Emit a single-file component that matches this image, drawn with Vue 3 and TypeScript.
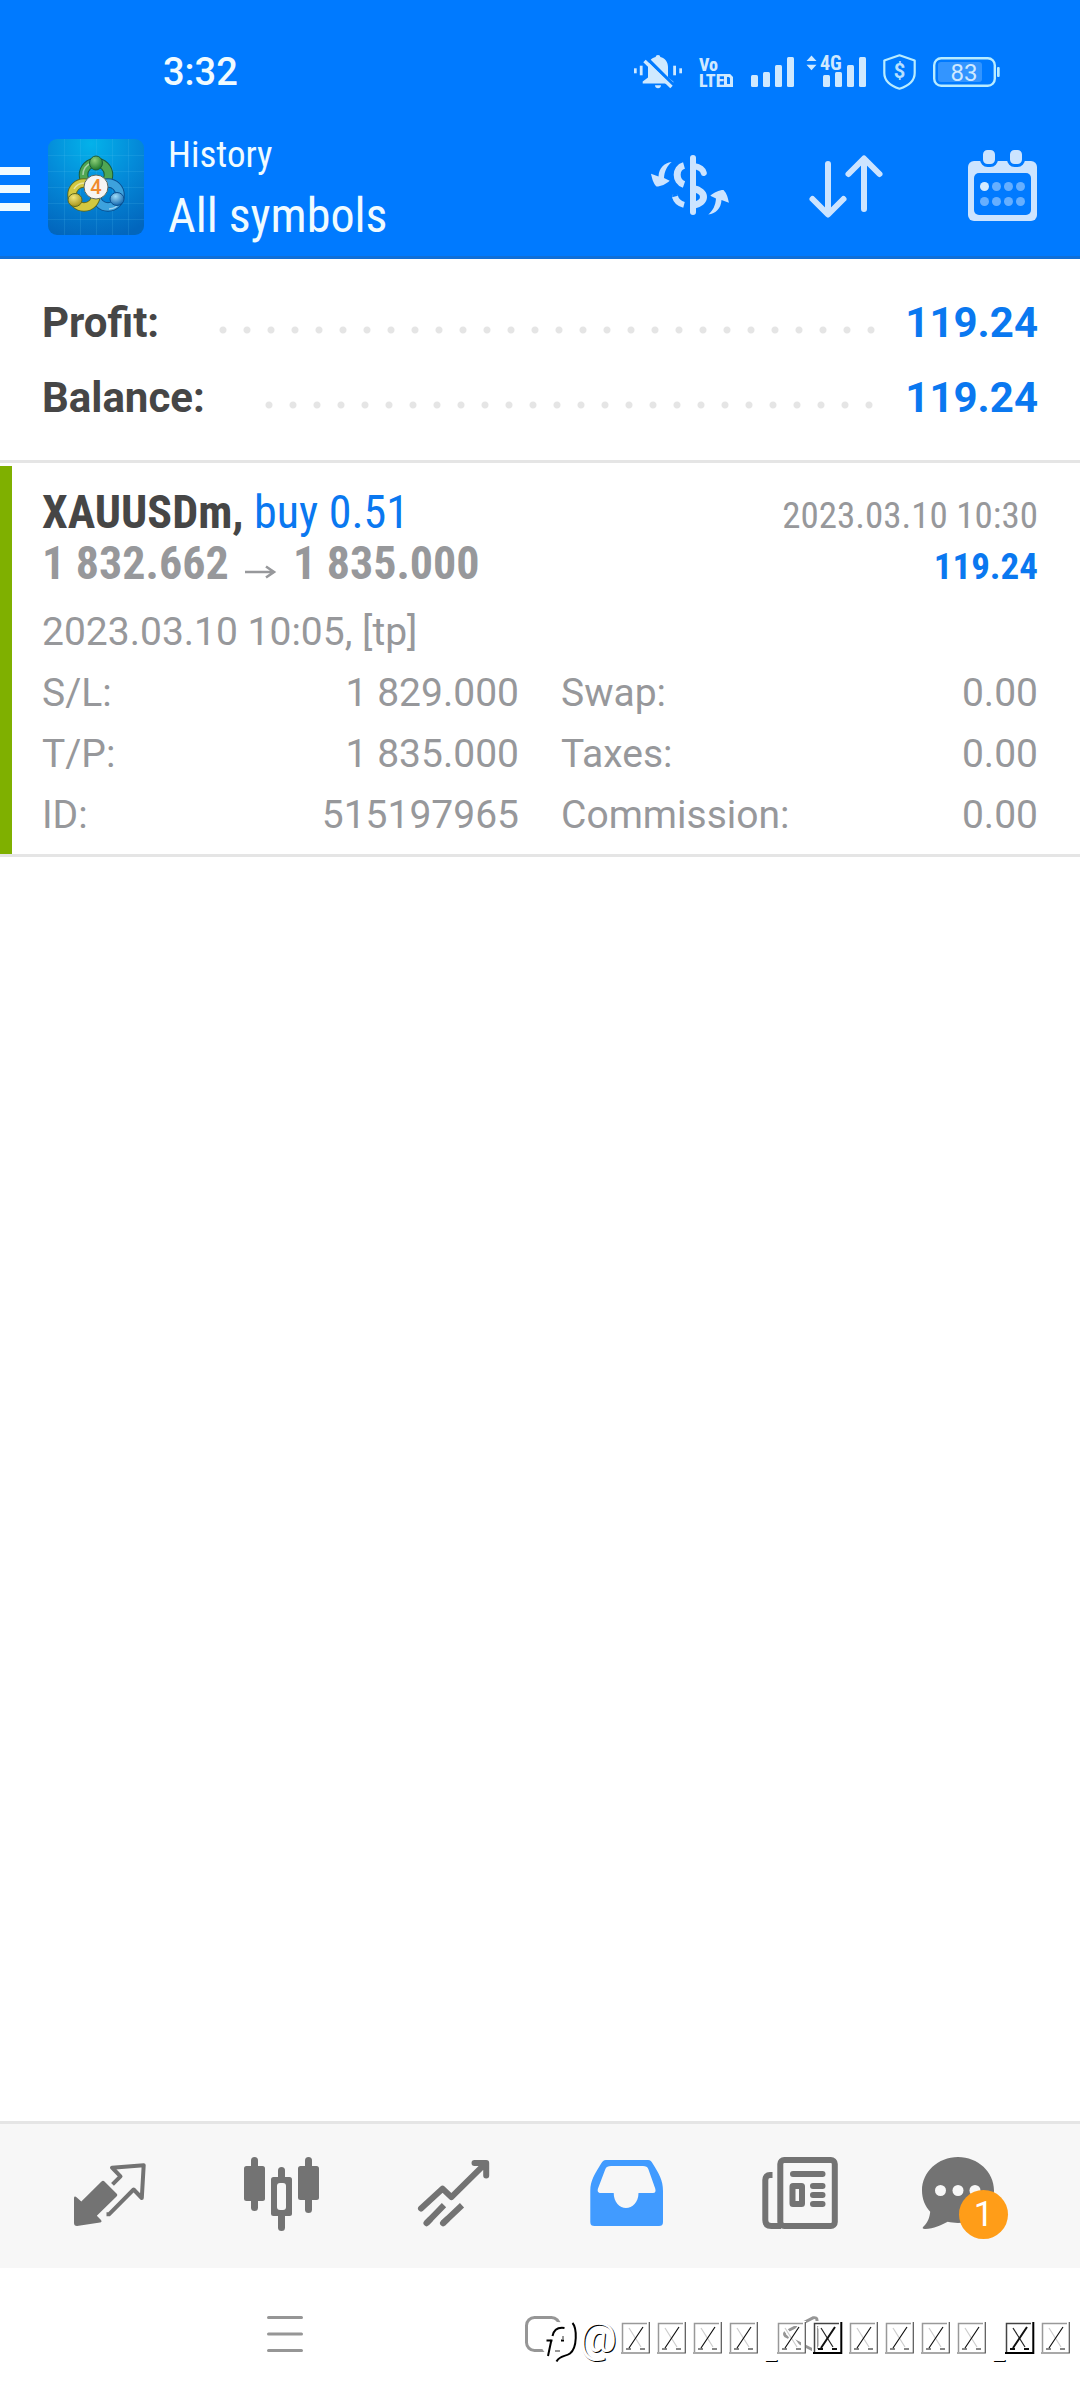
<script setup lang="ts">
interface Row {
  label: string
  value: string
}

const summary: Row[] = [
  { label: 'Profit:', value: '119.24' },
  { label: 'Balance:', value: '119.24' },
]

const details: Row[] = [
  { label: 'S/L:', value: '1 829.000' },
  { label: 'Swap:', value: '0.00' },
  { label: 'T/P:', value: '1 835.000' },
  { label: 'Taxes:', value: '0.00' },
  { label: 'ID:', value: '515197965' },
  { label: 'Commission:', value: '0.00' },
]

type Mark = 'box' | 'bold' | 'line'
const marks: Mark[] = [
  'box', 'box', 'box', 'box', 'line', 'box', 'bold', 'box',
  'box', 'box', 'box', 'line', 'bold', 'box',
]

const signalBars = [
  { x: 0, y: 21 },
  { x: 12, y: 18 },
  { x: 24, y: 11 },
  { x: 36, y: 3 },
]
</script>

<template>
  <div class="screen">
    <header class="top">
      <div class="status">
        <span class="clock">3:32</span>
        <div class="status-icons">
          <svg width="48" height="36" viewBox="0 0 48 36" aria-hidden="true">
            <g fill="#cfe9ff">
              <rect x="0" y="14.3" width="2.7" height="5" />
              <rect x="5.8" y="11.7" width="2.8" height="9.6" />
              <rect x="39.2" y="11.7" width="2.8" height="9.6" />
              <rect x="45.3" y="14.3" width="2.7" height="5" />
              <path d="M24 1c1.400 0 2.300.8 2.300 2C31 4 34 8 34 13v10.500l5.300 4V29.500H8.700V27.500l5.300-4V13c0-5 3-9 7.700-10C21.700 1.800 22.600 1 24 1z" />
              <path d="M21 31.200h6c0 1.800-1.300 3-3 3s-3-1.200-3-3z" />
            </g>
            <path d="M13 4.500L40 31.500" stroke="#007aff" stroke-width="3.500" />
            <path d="M10.500 7L37.500 33" stroke="#cfe9ff" stroke-width="3.500" />
          </svg>
          <svg width="35" height="36" viewBox="0 0 35 36" aria-hidden="true">
            <g fill="#cfe9ff" font-family="'Roboto Condensed', Roboto, sans-serif" font-weight="800">
              <text x="0" y="17" font-size="18">Vo</text>
              <text x="0" y="33" font-size="18">LTE</text>
            </g>
            <path d="M26.500 21.500h4l2 2v8h-6z" fill="none" stroke="#cfe9ff" stroke-width="3" />
          </svg>
          <svg width="115" height="36" viewBox="0 0 115 36" fill="#cfe9ff" aria-hidden="true">
            <rect v-for="b in signalBars" :key="b.x" :x="b.x" :y="b.y" width="7" :height="33 - b.y" rx="1.500" />
            <g transform="translate(72 0)">
              <rect v-for="b in signalBars" :key="b.x" :x="b.x" :y="b.y" width="7" :height="33 - b.y" rx="1.500" />
            </g>
            <path d="M55.500 7L60.500 1.500L65.500 7zM55.500 10.700L60.500 16.200L65.500 10.700z" />
            <text x="69" y="16" font-size="20" font-weight="700" font-family="'Roboto Condensed', Roboto, sans-serif">4G</text>
          </svg>
          <svg width="33" height="36" viewBox="0 0 33 36" aria-hidden="true">
            <path d="M16.500 1.300L31.700 6.500V19c0 8-6.700 13-15.200 15.700C8 32 1.300 27 1.300 19V6.500z" fill="none" stroke="#b9ecff" stroke-width="2.200" stroke-linejoin="round" />
            <text x="16.500" y="24" font-size="20" font-weight="700" text-anchor="middle" fill="#b9e0ff" font-family="Roboto, sans-serif">$</text>
          </svg>
          <svg width="67" height="36" viewBox="0 0 67 36" aria-hidden="true">
            <rect x="1.200" y="4.200" width="60.600" height="27.600" rx="7" fill="none" stroke="#b9ecff" stroke-width="2.400" />
            <rect x="5" y="8" width="44" height="20" rx="3" fill="#3395ff" />
            <rect x="64" y="13" width="2.700" height="10" rx="1" fill="#b9ecff" />
            <text x="31" y="27" font-size="24" text-anchor="middle" fill="#cfe9ff" font-weight="400" font-family="Roboto, sans-serif">83</text>
          </svg>
        </div>
      </div>

      <div class="toolbar">
        <button class="menu" type="button" aria-label="Menu">
          <span></span><span></span><span></span>
        </button>
        <svg class="logo" width="96" height="96" viewBox="0 0 96 96" aria-hidden="true">
          <defs>
            <radialGradient id="sky" cx="0.45" cy="0.05" r="1">
              <stop offset="0" stop-color="#04b2ea" />
              <stop offset="0.5" stop-color="#0489d8" />
              <stop offset="1" stop-color="#0266bd" />
            </radialGradient>
            <radialGradient id="green" cx="0.4" cy="0.3" r="0.7">
              <stop offset="0" stop-color="#8fd07a" />
              <stop offset="1" stop-color="#1f7a2c" />
            </radialGradient>
            <radialGradient id="gold" cx="0.4" cy="0.3" r="0.7">
              <stop offset="0" stop-color="#f2e67a" />
              <stop offset="1" stop-color="#a8951c" />
            </radialGradient>
            <radialGradient id="blue" cx="0.4" cy="0.3" r="0.7">
              <stop offset="0" stop-color="#9fdcf8" />
              <stop offset="1" stop-color="#1468b0" />
            </radialGradient>
          </defs>
          <rect width="96" height="96" rx="9" fill="url(#sky)" />
          <path d="M16.500 0v96M32.500 0v96M48.500 0v96M64.500 0v96M80.500 0v96M0 16.500h96M0 32.500h96M0 48.500h96M0 64.500h96M0 80.500h96" stroke="#5cc4f5" stroke-opacity="0.16" fill="none" />
          <g fill="none">
            <circle cx="48" cy="36" r="12.500" stroke="#1c5c3a" stroke-width="9.500" />
            <circle cx="48" cy="36" r="12.500" stroke="#4fa653" stroke-width="7.500" />
            <circle cx="60" cy="56" r="12" stroke="#0b4f8f" stroke-width="9.500" />
            <circle cx="60" cy="56" r="12" stroke="#3da2dd" stroke-width="7.500" />
            <circle cx="36" cy="56" r="12" stroke="#5f6a1d" stroke-width="9.500" />
            <circle cx="36" cy="56" r="12" stroke="#d3c840" stroke-width="7.500" />
            <path d="M35 36a13 13 0 0 1 8-12M26 50a12 12 0 0 1 10-6M61 70a13 13 0 0 0 11-7" stroke="#ffffff" stroke-opacity="0.5" stroke-width="1.500" />
          </g>
          <ellipse cx="48" cy="24" rx="6.500" ry="7" fill="url(#green)" stroke="#1c5c3a" />
          <ellipse cx="27" cy="61" rx="7" ry="6.500" fill="url(#gold)" stroke="#5f6a1d" />
          <ellipse cx="69" cy="60" rx="7" ry="6.500" fill="url(#blue)" stroke="#0b4f8f" />
          <circle cx="48" cy="48" r="12" fill="#f6f5f3" stroke="#5d6a60" />
          <text x="48" y="55" font-size="20" font-weight="500" text-anchor="middle" fill="#f08a2c" font-family="Roboto, sans-serif">4</text>
        </svg>
        <div class="titles">
          <div class="subtitle">History</div>
          <h1>All symbols</h1>
        </div>
        <div class="actions">
          <button type="button" aria-label="Convert currency">
            <svg width="80" height="72" viewBox="0 0 80 72">
              <g fill="none" stroke="#cce4ff" stroke-width="7">
                <path d="M43 8V62" stroke-width="6" stroke-linecap="round" />
                <path d="M34 15.500C24.900 18 24.900 31.500 34 34.500M43 38.500C57 41 57 53 43 55.500" />
                <path d="M44 16C50 17 53 19.500 53.800 23" stroke-linecap="round" stroke-width="6" />
                <path d="M25 46.500C26 50.500 29 53.500 34 54.800" stroke-width="6" />
                <circle cx="25" cy="46.500" r="0.100" stroke-width="5.500" />
              </g>
              <g fill="#cce4ff">
                <path d="M21.700 12C14 13 9 18 8.500 26.500L1 23.700C2 28 3 33 6.500 36.500C11 36.500 16 34 19.700 30.700L14 28C14.500 21 17 16 21.700 12Z" />
                <path transform="rotate(180 40 38.200)" d="M21.700 12C14 13 9 18 8.500 26.500L1 23.700C2 28 3 33 6.500 36.500C11 36.500 16 34 19.700 30.700L14 28C14.500 21 17 16 21.700 12Z" />
              </g>
            </svg>
          </button>
          <button type="button" aria-label="Sort">
            <svg width="80" height="72" viewBox="0 0 80 72">
              <path d="M22 14V64M6.500 49L22 64.500L37.500 49M58 59V9M42.500 24L58 8.500L73.500 24" fill="none" stroke="#cce4ff" stroke-width="6" stroke-linecap="round" stroke-linejoin="round" />
            </svg>
          </button>
          <button type="button" aria-label="Period">
            <svg width="80" height="72" viewBox="0 0 80 72">
              <rect x="6" y="11" width="69" height="60" rx="6" fill="#cce4ff" />
              <rect x="12" y="23" width="57" height="42" rx="5" fill="#007aff" />
              <g fill="#cce4ff" stroke="#007aff" stroke-width="3">
                <rect x="19.500" y="-1.500" width="15" height="17" rx="6" />
                <rect x="46.500" y="-1.500" width="15" height="17" rx="6" />
              </g>
              <g fill="#66afff">
                <circle cx="22.500" cy="36.500" r="4.500" fill="#d4ebff" />
                <circle cx="34.500" cy="36.500" r="4.500" />
                <circle cx="46.500" cy="36.500" r="4.500" />
                <circle cx="58.500" cy="36.500" r="4.500" />
                <circle cx="22.500" cy="51.500" r="4.500" />
                <circle cx="34.500" cy="51.500" r="4.500" />
                <circle cx="46.500" cy="51.500" r="4.500" />
                <circle cx="58.500" cy="51.500" r="4.500" />
              </g>
            </svg>
          </button>
        </div>
      </div>
    </header>

    <main>
      <dl class="summary">
        <div v-for="row in summary" :key="row.label" class="summary-row">
          <dt>{{ row.label }}</dt>
          <span class="dots"></span>
          <dd>{{ row.value }}</dd>
        </div>
      </dl>

      <article class="trade">
        <div class="line">
          <span class="symbol"><b>XAUUSDm,</b> <span class="buy">buy 0.51</span></span>
          <time class="closed">2023.03.10 10:30</time>
        </div>
        <div class="line">
          <span class="prices">
            1 832.662
            <svg width="31" height="14" viewBox="0 0 31 14" role="img" aria-label="to">
              <path d="M0 7H28M21 1.500L29 7L21 12.500" fill="none" stroke="#97989b" stroke-width="2.600" />
            </svg>
            1 835.000
          </span>
          <span class="result">119.24</span>
        </div>
        <div class="opened">2023.03.10 10:05, [tp]</div>
        <dl class="details">
          <div v-for="row in details" :key="row.label" class="detail">
            <dt>{{ row.label }}</dt>
            <dd>{{ row.value }}</dd>
          </div>
        </dl>
      </article>
    </main>

    <nav class="tabs" aria-label="Sections">
      <button type="button" aria-label="Quotes">
        <svg width="96" height="96" viewBox="0 0 96 96">
          <path d="M12 50c0-2 1.500-2 2.500-.8L19.300 53.500L39.500 33.500c1-1 2-1 3 0L54.500 45.500c1 1 1 2 0 3L34.800 67.700L39 72c1 1.500.5 2.200-1 2.500L15 78c-2 0-3-1-3-3z" fill="#737373" />
          <path d="M50.500 36.300L58.500 28.300L50 19.700L81.700 17.200L79.800 50L71.600 41.500L47 66.300H44.500" fill="none" stroke="#737373" stroke-width="4" stroke-linejoin="round" />
        </svg>
      </button>
      <button type="button" aria-label="Charts">
        <svg width="96" height="96" viewBox="0 0 96 96" fill="#737373">
          <rect x="17" y="9" width="7" height="54" rx="3.500" />
          <rect x="10" y="18" width="21" height="35" rx="2.500" />
          <rect x="44" y="19" width="7" height="64" rx="3.500" />
          <rect x="37" y="29" width="21" height="39" rx="2.500" />
          <rect x="43" y="35" width="9" height="27" rx="3" fill="#f7f7f7" />
          <rect x="71" y="9" width="7" height="56" rx="3.500" />
          <rect x="64" y="18" width="21" height="34" rx="2.500" />
        </svg>
      </button>
      <button type="button" aria-label="Trade">
        <svg width="96" height="96" viewBox="0 0 96 96" fill="none" stroke="#737373" stroke-width="6">
          <path d="M15 60.500L36.500 40.700L45.400 49.200L79 15.800M68.500 15H80.200V27.500" stroke-linecap="round" stroke-linejoin="round" />
          <path d="M20.500 75.200L38 57.200M37 75.200L56 57.200" />
          <path d="M20.500 75.200L24 71.600M37 75.200L41 71.400" stroke-linecap="round" />
        </svg>
      </button>
      <button type="button" aria-label="History" aria-current="page">
        <svg width="96" height="96" viewBox="0 0 96 96">
          <path fill="#419bff" fill-rule="evenodd" d="M28 12H70c2.500 0 3.500 1.500 4.500 3.300C81 26 85 32 85 43V74c0 3-1.500 4-4 4H16.500c-2.500 0-4.200-1-4.200-4V43C12.300 32 17 26 23.300 15.300C24.500 13.500 25.500 12 28 12zM33 18c-3 0-4.500.8-5.600 3L20 40.500c-1 3 .5 4.500 2.500 4.500H35.700c0 9 6 15 12.300 15s12.500-6 12.500-15H75c2.500 0 3-1.800 2.200-4.500L70.300 21c-1-2.200-2.300-3-5.300-3z" />
        </svg>
      </button>
      <button type="button" aria-label="News">
        <svg width="96" height="96" viewBox="0 0 96 96" fill="none" stroke="#737373" stroke-width="6">
          <rect x="30.300" y="12" width="54.500" height="66" rx="4" />
          <path d="M22.500 27H20c-3 0-4.700 2-4.700 5V72c0 4 2 6 6 6H31" />
          <path d="M43 26H72.500M63 38H72.500M63 47H72.500M63 56H72.500" stroke-linecap="round" />
          <rect x="42.500" y="38" width="9.500" height="18" rx="0.500" />
        </svg>
      </button>
      <button type="button" aria-label="Messages, 1 unread">
        <span class="messages">
          <svg width="96" height="96" viewBox="0 0 96 96">
            <path d="M36 9C56 9 72 24 72 42.500S56 75 36 75c-4 0-7-.5-10.300-1.200C19 77.500 12 80.500 3 81C.5 81 0 80 1.500 78.500C6 74 7.500 70 8.200 63.700C3 58 0 51 0 42.500C0 24 16 9 36 9z" fill="#737373" />
            <g fill="#f7f7f7">
              <circle cx="18.500" cy="42.500" r="5.500" />
              <circle cx="36" cy="42.500" r="5.500" />
              <circle cx="53" cy="42.500" r="5.500" />
            </g>
          </svg>
          <span class="badge">1</span>
        </span>
      </button>
    </nav>

    <footer class="system">
      <div class="system-keys">
        <button type="button" aria-label="Recent apps">
          <svg width="36" height="36" viewBox="0 0 36 36" stroke="#969696" stroke-width="3" stroke-linecap="round">
            <path d="M1.500 1.500h33M1.500 18h33M1.500 34.500h33" />
          </svg>
        </button>
        <button type="button" aria-label="Home">
          <svg width="36" height="36" viewBox="0 0 36 36" fill="none" stroke="#969696" stroke-width="3">
            <rect x="1.500" y="1.500" width="33" height="33" rx="8" />
          </svg>
        </button>
        <button type="button" aria-label="Back">
          <svg width="36" height="36" viewBox="0 0 36 36" fill="none" stroke="#969696" stroke-width="3" stroke-linejoin="round">
            <path d="M2.500 16L30 1.800Q34 1 34 4V32Q34 35 30 34L2.500 20Q.5 18 2.500 16z" />
          </svg>
        </button>
      </div>
      <div class="watermark">
        <svg width="40" height="44" viewBox="0 0 40 44" aria-hidden="true">
          <path d="M18 2C30 2 37 8 37 19S31 36 24 36L17 41V36C6 36 1 29 1 19S7 2 18 2z" fill="#fff" />
          <path d="M33.500 3C38 8 38.500 28 31 33.500C26 37 21 35 17.500 41.500" fill="none" stroke="#000" stroke-width="2" />
          <path d="M25.500 8C19 7 15 9 13.500 16M12.500 19.500L9 36M7.500 20.500h6M22 20.500h3" fill="none" stroke="#000" stroke-width="2" />
          <path d="M24 16v3M16 31h5" fill="none" stroke="#969696" stroke-width="2" />
        </svg>
        <span class="at">@</span>
        <template v-for="(m, i) in marks" :key="i">
          <span v-if="m === 'line'" class="under">_</span>
          <svg v-else class="glyph" width="29" height="32" viewBox="0 0 29 32" aria-hidden="true">
            <rect x="1.500" y="1.500" width="25" height="28" fill="none" stroke="#fff" stroke-width="5" />
            <path d="M6 4L23 27M23 4L6 27" stroke="#fff" stroke-width="4" />
            <path d="M1.500 30V1.500H26" fill="none" :stroke="m === 'bold' ? '#444' : '#999'" stroke-width="1.500" />
            <path d="M0 31H28.300V0" fill="none" :stroke="m === 'bold' ? '#000' : '#555'" :stroke-width="m === 'bold' ? 2 : 1.2" />
            <path d="M8 6L20 25" fill="none" :stroke="m === 'bold' ? '#222' : '#ccc'" stroke-width="1.200" />
            <path d="M22 5L8 26M5 27h5M19 27h5" fill="none" stroke="#111" :stroke-width="m === 'bold' ? 2 : 1.2" />
          </svg>
        </template>
      </div>
    </footer>
  </div>
</template>

<style>
body {
  margin: 0;
  background: #fff;
}
</style>

<style scoped>
.screen {
  --condensed: 'Roboto Condensed', 'Liberation Sans Narrow', Roboto, sans-serif;
  display: flex;
  flex-direction: column;
  min-height: 100vh;
  background: #fff;
  color: #97989b;
  font-family: Roboto, sans-serif;
  font-size: 39px;
}

button {
  padding: 0;
  border: 0;
  background: none;
  font: inherit;
}

svg {
  display: block;
  flex: none;
  overflow: visible;
}

h1,
dl,
dd {
  margin: 0;
}

.top {
  background: #007aff;
  border-bottom: 3px solid #106fd8;
  color: #f0fbff;
}

.status {
  display: flex;
  align-items: center;
  justify-content: space-between;
  height: 88px;
  padding: 28px 80px 0 163px;
}

.clock {
  font-size: 38px;
  font-weight: 500;
}

.status-icons {
  display: flex;
  gap: 17px;
}

.toolbar {
  display: flex;
  align-items: center;
  height: 140px;
  padding-right: 38px;
}

.menu {
  display: flex;
  flex-direction: column;
  gap: 10px;
  width: 30px;
  padding-top: 6px;
}

.menu span {
  height: 8px;
  background: #f0fbff;
}

.logo {
  margin: 2px 24px 0 18px;
}

.titles {
  flex: 1;
  font-family: var(--condensed);
}

.subtitle {
  font-size: 37px;
  line-height: 60px;
}

h1 {
  font-size: 48px;
  font-weight: 400;
  line-height: 62px;
}

.actions {
  display: flex;
  gap: 76px;
}

.summary {
  padding: 26px 42px 25px;
  border-bottom: 3px solid #e5e5e5;
  font-size: 42px;
  font-weight: 700;
  line-height: 75px;
}

.summary-row {
  display: flex;
}

.summary dt {
  color: #464646;
}

.summary dd,
.result {
  color: #0a78f0;
}

.dots {
  flex: 1;
  align-self: flex-end;
  height: 8px;
  margin: 0 22px 26px 52px;
  background: radial-gradient(circle, #e5e5e5 3px, transparent 4px) 0 0 / 24px 8px;
}

.trade {
  margin-top: 3px;
  padding: 21px 42px 8px 30px;
  border-left: 12px solid #7fb000;
  position: relative;
}

.trade::after {
  content: '';
  position: absolute;
  top: 100%;
  left: -12px;
  right: 0;
  height: 3px;
  background: #e5e5e5;
}

.line {
  display: flex;
  align-items: baseline;
  justify-content: space-between;
  height: 51px;
  font-family: var(--condensed);
  font-size: 37px;
  line-height: 51px;
}

.symbol,
.prices {
  font-size: 46px;
}

.symbol b {
  color: #464646;
}

.buy {
  color: #0a78f0;
}

.prices,
.result {
  font-weight: 700;
}

.prices svg {
  display: inline-block;
  margin: 0 6px;
}

.opened {
  margin-top: 13px;
  line-height: 61px;
}

.details {
  display: grid;
  grid-template-columns: 1fr 1fr;
  column-gap: 42px;
  line-height: 61px;
}

.detail {
  display: flex;
  justify-content: space-between;
}

.tabs {
  display: grid;
  grid-template-columns: repeat(6, 1fr);
  justify-items: center;
  align-items: center;
  height: 144px;
  margin-top: auto;
  padding: 0 24px;
  border-top: 3px solid #e5e5e5;
  background: #f7f7f7;
}

.messages {
  display: block;
  position: relative;
}

.badge {
  position: absolute;
  top: 42px;
  left: 37px;
  width: 49px;
  height: 49px;
  border-radius: 50%;
  background: #ff9d18;
  color: #fff;
  font-size: 35px;
  line-height: 49px;
  text-align: center;
}

.system {
  position: relative;
  height: 132px;
}

.system-keys {
  display: grid;
  grid-template-columns: repeat(3, 1fr);
  justify-items: center;
  padding: 48px 150px 0 156px;
}

.watermark {
  position: absolute;
  top: 52px;
  right: 10px;
  display: flex;
  align-items: flex-start;
  color: #fff;
  text-shadow: 1px 1px 0 #000;
}

.at {
  width: 38px;
  margin-right: 4px;
  font-size: 42px;
  line-height: 36px;
}

.glyph {
  margin: 2px 7px 0 0;
}

.glyph:last-child {
  margin-right: 0;
}

.under {
  width: 12px;
  font-size: 26px;
  line-height: 60px;
}
</style>
